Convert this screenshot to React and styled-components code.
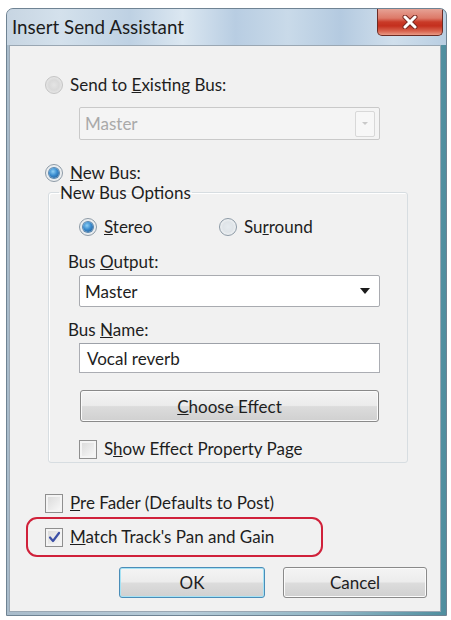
import React from 'react';
import styled, { createGlobalStyle } from 'styled-components';

const Global = createGlobalStyle`
  html, body { margin: 0; padding: 0; background: #ffffff; }
  body { font-family: Lato, "Noto Sans", sans-serif; color: #1e1e1e; }
  * { box-sizing: border-box; }
`;

const Window = styled.div`
  margin: 8px 0 0 6px;
  width: 441px;
  height: 608px;
  border: 1px solid #6f8393;
  border-radius: 7px 7px 0 0;
  display: flex;
  flex-direction: column;
  overflow: hidden;
  background: linear-gradient(90deg, #a9bccb 0%, #b7ccd9 40%, #8fb5c4 75%, #4f8e9f 100%);
`;

const TitleBar = styled.div`
  height: 36px;
  display: flex;
  align-items: flex-start;
  justify-content: space-between;
  padding-left: 5px;
  background: linear-gradient(90deg, #c7d5e2 0%, #d4e1ec 12%, #bed1e3 28%, #dbe7f1 40%, #b8cde2 52%, #c9dae9 64%, #b4cae0 76%, #d0dfec 88%, #b9cee2 100%);
`;

const Title = styled.div`
  font-size: 18.8px;
  line-height: 36px;
  color: #1c1c1c;
`;

const CloseButton = styled.div`
  width: 66px;
  height: 27px;
  margin-right: 3px;
  border: 1px solid #6b2b24;
  border-top: none;
  border-radius: 0 0 5px 5px;
  background: linear-gradient(180deg, #e6a295 0%, #dd7a69 35%, #c93a28 50%, #c42f1e 65%, #d8634e 85%, #e99a86 100%);
  display: flex;
  align-items: center;
  justify-content: center;
`;

const FrameBody = styled.div`
  flex: 1;
  display: flex;
  padding: 0 5px 3px 2px;
`;

const Client = styled.div`
  flex: 1;
  background: #f1f1f1;
  border: 1px solid #9aa7b3;
  padding: 29px 0 0 35px;
  display: flex;
  flex-direction: column;
  align-items: flex-start;
  font-size: 17px;
`;

const OptionRow = styled.label`
  display: flex;
  align-items: center;
  height: 20px;
  line-height: 20px;
  gap: 7px;
  margin-top: ${p => p.$mt || 0}px;
  margin-left: ${p => p.$ml || 0}px;
  width: ${p => (p.$w ? p.$w + 'px' : 'auto')};
  white-space: nowrap;
`;

const RadioCircle = styled.span`
  width: 18px;
  height: 18px;
  flex: none;
  border-radius: 50%;
  border: 1px solid ${p => (p.$disabled ? '#c4c4c4' : '#8d9aa6')};
  background: ${p =>
    p.$disabled
      ? 'radial-gradient(circle at 50% 50%, #e4e4e4 0%, #d9d9d9 45%, #f2f2f2 100%)'
      : 'radial-gradient(circle at 50% 50%, #e6ebef 0%, #dfe4e8 45%, #ffffff 100%)'};
  display: flex;
  align-items: center;
  justify-content: center;
  &::after {
    content: '';
    display: ${p => (p.$checked ? 'block' : 'none')};
    width: 10px;
    height: 10px;
    border-radius: 50%;
    background: radial-gradient(circle at 40% 35%, #8fd0f5 0%, #3a8ccf 45%, #1d4f87 100%);
    box-shadow: 0 0 0 1px #5a88b0;
  }
`;

const CheckBox = styled.span`
  width: 18px;
  height: 19px;
  flex: none;
  border: 1px solid #8f8f8f;
  background: linear-gradient(135deg, #d8d8d8 0%, #e9e9e9 50%, #fbfbfb 100%);
  box-shadow: inset 0 0 0 2px #f4f4f4;
  display: flex;
  align-items: center;
  justify-content: center;
`;

const Combo = styled.div`
  width: 301px;
  height: ${p => p.$h}px;
  margin-top: ${p => p.$mt}px;
  margin-left: ${p => p.$ml || 0}px;
  border: 1px solid ${p => (p.$disabled ? '#c9c9c9' : '#a9abb0')};
  border-radius: 2px;
  background: ${p => (p.$disabled ? '#f4f4f4' : '#ffffff')};
  color: ${p => (p.$disabled ? '#a9a9a9' : '#1e1e1e')};
  display: flex;
  align-items: center;
  justify-content: space-between;
  padding: 0 4px 0 5px;
`;

const DisabledDrop = styled.span`
  width: 20px;
  height: 26px;
  border: 1px solid #d8d8d8;
  border-radius: 2px;
  background: #f7f7f7;
  display: flex;
  align-items: center;
  justify-content: center;
  &::after {
    content: '';
    border-left: 3px solid transparent;
    border-right: 3px solid transparent;
    border-top: 3px solid #c9c9c9;
  }
`;

const Arrow = styled.span`
  margin-right: 5px;
  border-left: 5px solid transparent;
  border-right: 5px solid transparent;
  border-top: 6px solid #1b1b1b;
`;

const Group = styled.fieldset`
  margin: 1px 0 0 3px;
  width: 360px;
  padding: 0 0 3px 19px;
  border: 1px solid #d7dde1;
  border-radius: 3px;
  box-shadow: inset 1px 1px 0 #ffffff;
  display: flex;
  flex-direction: column;
  align-items: flex-start;
`;

const Legend = styled.legend`
  margin-left: -9px;
  padding: 0 1px;
  line-height: 17px;
  height: 17px;
`;

const RadioLine = styled.div`
  display: flex;
  margin-top: 16px;
  margin-left: 11px;
`;

const FieldLabel = styled.div`
  height: 20px;
  line-height: 20px;
  margin-top: ${p => p.$mt}px;
`;

const TextInput = styled.div`
  width: 301px;
  height: 30px;
  margin-top: 3px;
  margin-left: 11px;
  border: 1px solid #abadb3;
  border-top-color: #9da1a8;
  background: #ffffff;
  display: flex;
  align-items: center;
  padding-left: 7px;
`;

const PushButton = styled.div`
  width: ${p => p.$w}px;
  height: ${p => p.$h}px;
  margin-top: ${p => p.$mt || 0}px;
  margin-left: ${p => p.$ml || 0}px;
  border: 1px solid ${p => (p.$default ? '#4a8db8' : '#8a8a8a')};
  border-radius: 3px;
  background: linear-gradient(180deg, #f4f4f4 0%, #ececec 48%, #dcdcdc 52%, #d0d0d0 100%);
  box-shadow: inset 0 0 0 1px ${p => (p.$default ? '#a6e2f4' : '#fbfbfb')};
  display: flex;
  align-items: center;
  justify-content: center;
`;

const Highlight = styled.div`
  margin: 4px 0 0 -19px;
  width: 297px;
  height: 40px;
  border: 2px solid #d0213a;
  border-radius: 11px;
  padding: 8px 0 0 17px;
`;

const ButtonRow = styled.div`
  display: flex;
  gap: 18px;
  margin: 10px 0 0 74px;
`;

const Check = () => (
  <svg width="13" height="13" viewBox="0 0 13 13">
    <path d="M2 6.5 L5 10 L11 2" fill="none" stroke="#3b4fa6" strokeWidth="2.2" strokeLinecap="round" strokeLinejoin="round" />
  </svg>
);

const CloseX = () => (
  <svg width="16" height="14" viewBox="0 0 16 14">
    <path d="M3 2 L13 12 M13 2 L3 12" stroke="#7a2a22" strokeWidth="5" strokeLinecap="round" />
    <path d="M3 2 L13 12 M13 2 L3 12" stroke="#ffffff" strokeWidth="3" strokeLinecap="round" />
  </svg>
);

export default function App() {
  return (
    <>
      <Global />
      <Window>
        <TitleBar>
          <Title>Insert Send Assistant</Title>
          <CloseButton>
            <CloseX />
          </CloseButton>
        </TitleBar>
        <FrameBody>
          <Client>
            <OptionRow>
              <RadioCircle $disabled />
              <span>Send to <u>E</u>xisting Bus:</span>
            </OptionRow>
            <Combo $disabled $h={33} $mt={12} $ml={34}>
              <span>Master</span>
              <DisabledDrop />
            </Combo>
            <OptionRow $mt={23}>
              <RadioCircle $checked />
              <span><u>N</u>ew Bus:</span>
            </OptionRow>
            <Group>
              <Legend>New Bus Options</Legend>
              <RadioLine>
                <OptionRow $w={140}>
                  <RadioCircle $checked />
                  <span><u>S</u>tereo</span>
                </OptionRow>
                <OptionRow>
                  <RadioCircle />
                  <span>Su<u>r</u>round</span>
                </OptionRow>
              </RadioLine>
              <FieldLabel $mt={15}>Bus <u>O</u>utput:</FieldLabel>
              <Combo $h={32} $mt={3} $ml={11}>
                <span>Master</span>
                <Arrow />
              </Combo>
              <FieldLabel $mt={13}>Bus <u>N</u>ame:</FieldLabel>
              <TextInput>Vocal reverb</TextInput>
              <PushButton $w={299} $h={32} $mt={17} $ml={12}>
                <span><u>C</u>hoose Effect</span>
              </PushButton>
              <OptionRow $mt={17} $ml={11}>
                <CheckBox />
                <span>S<u>h</u>ow Effect Property Page</span>
              </OptionRow>
            </Group>
            <OptionRow $mt={30}>
              <CheckBox />
              <span><u>P</u>re Fader (Defaults to Post)</span>
            </OptionRow>
            <Highlight>
              <OptionRow>
                <CheckBox>
                  <Check />
                </CheckBox>
                <span><u>M</u>atch Track's Pan and Gain</span>
              </OptionRow>
            </Highlight>
            <ButtonRow>
              <PushButton $w={146} $h={31} $default>OK</PushButton>
              <PushButton $w={144} $h={31}>Cancel</PushButton>
            </ButtonRow>
          </Client>
        </FrameBody>
      </Window>
    </>
  );
}
